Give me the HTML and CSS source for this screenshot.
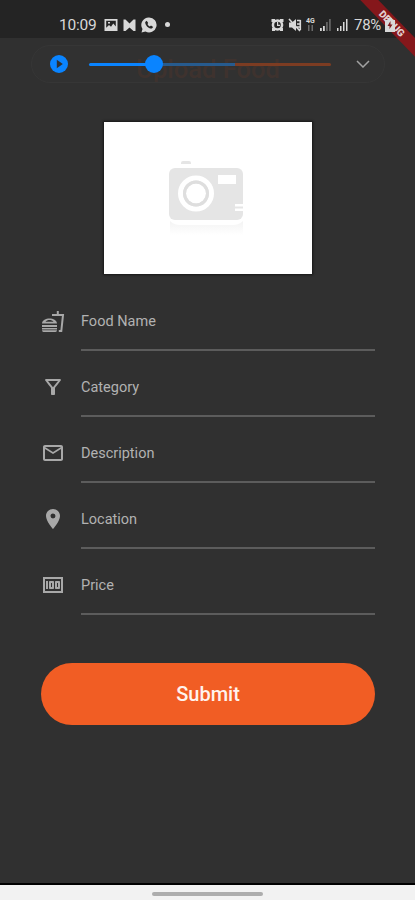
FILE: index.html
```html
<!DOCTYPE html>
<html lang="en">
<head>
  <meta charset="UTF-8" />
  <meta name="viewport" content="width=device-width, initial-scale=1.0"/>
  <title>Upload Food</title>
  <link rel="stylesheet" href="styles.css">
</head>
<body>
  <div class="status-bar">
    <div class="status-left">
      <span class="time">10:09</span>
      <svg width="14" height="14" viewBox="0 0 14 14"><path fill-rule="evenodd" d="M.5 1h13v12H.5zM2.200 2.700v7l2.800-2.600 2 1.700 2.300-3.300 2.500 3V2.700zM4 4h2v1.500H4z"/></svg>
      <svg width="13" height="14" viewBox="0 0 13 14"><path d="M.5 1.500h2l4 4 4-4h2v11.500h-2L6.500 9.500 2.500 13h-2z"/></svg>
      <svg width="16" height="16" viewBox="0 0 16 16"><path d="M8 .5a7.500 7.500 0 1 1-3.500 14.100L.5 15.500l1-3.500A7.500 7.500 0 0 1 8 .5z"/><path class="ink" d="M5.700 3.700 4.200 4.900c-.3 3 3.400 7 6.700 6.600l1.300-1.500-2.200-1.400-1.200.9C7.700 9 6.900 8 6.500 7l.7-1z"/></svg>
      <span class="dot"></span>
    </div>
    <div class="status-right">
      <svg width="13" height="14" viewBox="0 0 13 14"><path d="M.5 1h3.500v3H.5zM9 1h3.500v3H9zM1 10h3v3H1zM9 10h3v3H9z"/><circle cx="6.500" cy="7" r="5.800"/><circle class="ink" cx="6.500" cy="7" r="3.300"/><path d="M6 4h1.200v2.800H9V8H6z"/></svg>
      <svg width="14" height="14" viewBox="0 0 14 14"><path d="M1 4.500h3L8 1v12L4 9.500H1z"/><path class="line" d="m1 1 11 12M9 2.500h3.500M9 6h3.500M9 9h3.500M12.300 2v10"/></svg>
      <div class="network"><span>4G</span><svg width="9" height="6" viewBox="0 0 9 6"><path opacity=".4" d="M2 0h1.500v6H2zM5.500 0H7v6H5.500z"/></svg></div>
      <svg width="13" height="13" viewBox="0 0 13 13"><path d="M1 10h1.800v3H1zM4 8h1.800v5H4z"/><path opacity=".35" d="M7 4h1.800v9H7zM10 1h1.800v12H10z"/></svg>
      <svg width="13" height="13" viewBox="0 0 13 13"><path d="M1 10h1.500v3H1zM4 8h1.500v5H4zM7 4h1.500v9H7zM10 1h1.500v12H10z"/></svg>
      <span class="percent">78%</span>
      <svg width="10" height="14" viewBox="0 0 10 14"><path d="M3 0h4v2h3v12H0V2h3z"/><path class="bolt" d="M5.500 3 2.500 8h2v3l3-4.500h-2z"/></svg>
    </div>
  </div>
  <div class="ribbon">DEBUG</div>

  <header>
    <h1>Upload Food</h1>
    <div class="recorder">
      <svg width="18" height="18" viewBox="0 0 18 18"><circle cx="9" cy="9" r="9" fill="#0a84ff"/><path d="M6.800 4.700v8.600l6-4.300z" fill="#303030"/></svg>
      <div class="track"><span class="thumb"></span></div>
      <svg width="14" height="8" viewBox="0 0 14 8"><path d="m1 1 6 6 6-6" fill="none" stroke="#a2a2a2" stroke-width="1.500"/></svg>
    </div>
  </header>

  <main>
    <div class="photo">
      <svg width="80" height="76" viewBox="0 0 80 76">
        <defs>
          <linearGradient id="fade" x1="0" y1="0" x2="0" y2="1">
            <stop offset="0" stop-color="#f3f3f3"/>
            <stop offset="1" stop-color="#fff"/>
          </linearGradient>
        </defs>
        <path d="M13 3q0-2 2-2h6q2 0 2 2v1H13z" fill="#e5e5e5"/>
        <rect x="1" y="8" width="74" height="52" rx="6" fill="#e5e5e5"/>
        <circle cx="28" cy="33.500" r="15.500" fill="none" stroke="#fff" stroke-width="5"/>
        <circle cx="28" cy="33.500" r="10" fill="#fff"/>
        <circle cx="28" cy="33.500" r="11.500" fill="none" stroke="#dedede" stroke-width="3"/>
        <path d="M50 15h18v9H50zM67 44h9v2.500h-9zM67 48.500h9V51h-9z" fill="#fff"/>
        <path d="M2 61q4 4 10 4h53q6 0 10-4v14H2z" fill="url(#fade)"/>
      </svg>
    </div>

    <form>
      <label class="field">
        <svg width="24" height="24" viewBox="0 0 24 24"><path d="M1 14.500C1.500 7.800 15.500 7.800 16 14.500zM1 16h15v2H1zM1 19h15v1.500H1zM1 21.300h15q0 1.700-1.500 1.700h-12Q1 23 1 21.300z"/><path class="cut" d="M4.500 12.800c1.500-2.300 6.500-2.300 8 0z"/><path class="cup" d="M11 6h11l-1.700 16h-2.500M16.800 6V2"/></svg>
        <input type="text" placeholder="Food Name" />
      </label>
      <label class="field">
        <svg width="24" height="24" viewBox="0 0 24 24"><path d="M7 6h10l-5.010 6.300L7 6zm-2.750-.390C6.270 8.200 10 13 10 13v6c0 .55.450 1 1 1h2c.55 0 1-.45 1-1v-6s3.720-4.800 5.740-7.390A.998.998 0 0 0 18.950 4H5.040c-.83 0-1.300.950-.790 1.610z"/></svg>
        <input type="text" placeholder="Category" />
      </label>
      <label class="field">
        <svg width="24" height="24" viewBox="0 0 24 24"><path d="M20 4H4c-1.100 0-2 .9-2 2v12c0 1.100.9 2 2 2h16c1.100 0 2-.9 2-2V6c0-1.100-.9-2-2-2zm0 14H4V8l8 5 8-5v10zm-8-7L4 6h16l-8 5z"/></svg>
        <input type="text" placeholder="Description" />
      </label>
      <label class="field">
        <svg width="24" height="24" viewBox="0 0 24 24"><path d="M12 2C8.130 2 5 5.130 5 9c0 5.250 7 13 7 13s7-7.750 7-13c0-3.870-3.130-7-7-7zm0 9.500a2.500 2.500 0 0 1 0-5 2.500 2.500 0 0 1 0 5z"/></svg>
        <input type="text" placeholder="Location" />
      </label>
      <label class="field">
        <svg width="24" height="24" viewBox="0 0 24 24"><path d="M5 8h2v8H5zm7 0H9c-.55 0-1 .45-1 1v6c0 .55.450 1 1 1h3c.55 0 1-.45 1-1V9c0-.55-.45-1-1-1zm-1 6h-1v-4h1v4zm7-6h-3c-.55 0-1 .45-1 1v6c0 .55.450 1 1 1h3c.55 0 1-.45 1-1V9c0-.55-.45-1-1-1zm-1 6h-1v-4h1v4z"/><path d="M2 4v16h20V4H2zm2 14V6h16v12H4z"/></svg>
        <input type="text" placeholder="Price" />
      </label>
      <button class="submit" type="button">Submit</button>
    </form>
  </main>

  <div class="nav-bar"><span class="handle"></span></div>
</body>
</html>
```

FILE: styles.css
```css
:root {
  --bg: #303030;
  --bar: #242424;
  --text: #b2b2b2;
  --status: #d8d8d8;
  --primary: #f15d24;
  --blue: #0a84ff;
}
* {
  box-sizing: border-box;
}
body {
  margin: 0;
  position: relative;
  height: 900px;
  overflow: hidden;
  font-family: Roboto, sans-serif;
  background: var(--bg);
  color: var(--text);
  display: flex;
  flex-direction: column;
}
svg {
  display: block;
  flex: none;
}
.status-bar {
  height: 38px;
  padding: 11px 20px 0 59px;
  background: var(--bar);
  color: var(--status);
  fill: var(--status);
  display: flex;
  justify-content: space-between;
}
.status-left,
.status-right {
  height: 27px;
  display: flex;
  align-items: center;
}
.status-left {
  gap: 5px;
}
.status-right {
  gap: 4px;
}
.time {
  font-size: 15.5px;
  letter-spacing: -0.2px;
  width: 40px;
}
.percent {
  font-size: 15px;
  letter-spacing: -0.3px;
  margin-left: 1px;
}
.dot {
  width: 5px;
  height: 5px;
  margin-left: 3px;
  border-radius: 50%;
  background: var(--status);
}
.ink {
  fill: var(--bar);
}
.line {
  fill: none;
  stroke: var(--status);
  stroke-width: 1.6;
}
.network {
  font-size: 7px;
  line-height: 7px;
  font-weight: 700;
}
.status-right svg:last-child {
  position: relative;
  z-index: 2;
}
.bolt {
  fill: #801a1c;
}
.ribbon {
  position: absolute;
  z-index: 1;
  top: 17px;
  right: -27px;
  width: 100px;
  height: 13px;
  background: #85171b;
  color: #e3d0d0;
  font-size: 10px;
  font-weight: 900;
  line-height: 13px;
  text-align: center;
  transform: rotate(46deg);
}
header {
  height: 84px;
  padding: 7px 30px 0 31px;
  display: grid;
}
h1 {
  grid-area: 1 / 1;
  margin: 9px 0 0;
  font-size: 25.5px;
  line-height: 30px;
  font-weight: 500;
  text-align: center;
  color: #4b332b;
}
.recorder {
  grid-area: 1 / 1;
  position: relative;
  height: 38px;
  padding: 0 14px 0 18px;
  border: 1px solid #363636;
  border-radius: 19px;
  background: rgba(50, 50, 50, 0.5);
  display: flex;
  align-items: center;
}
.track {
  width: 242px;
  height: 3px;
  margin: 0 25px 0 21px;
  border-radius: 2px;
  background: linear-gradient(to right, var(--blue) 64px, #275b8e 64px, #275b8e 146px, #7c3c22 146px);
  display: flex;
  align-items: center;
}
.thumb {
  flex: none;
  width: 18px;
  height: 18px;
  margin-left: 56px;
  border-radius: 50%;
  background: var(--blue);
}
main {
  flex: 1;
  padding: 0 40px 0 41px;
}
.photo {
  width: 208px;
  height: 152px;
  margin: 0 auto;
  padding: 38px 0 0 64px;
  background: #fff;
  box-shadow: 0 0 2px 1px #161616;
}
form {
  padding-top: 27px;
}
.field {
  height: 66px;
  display: flex;
  align-items: flex-start;
  gap: 16px;
}
.field svg {
  margin-top: 8px;
  fill: #a8a8a8;
}
.field .cut {
  fill: var(--bg);
}
.field .cup {
  fill: none;
  stroke: #a8a8a8;
  stroke-width: 2;
}
.field input {
  flex: 1;
  min-width: 0;
  height: 50px;
  padding: 0 0 8px;
  border: none;
  border-bottom: 2px solid #5c5c5c;
  background: none;
  color: var(--text);
  font: 14.5px Roboto, sans-serif;
  outline: none;
}
.field input::placeholder {
  color: var(--text);
  opacity: 1;
}
.submit {
  width: 100%;
  height: 62px;
  margin-top: 32px;
  padding-bottom: 2px;
  border: none;
  border-radius: 31px;
  background: var(--primary);
  color: #fff3ee;
  font: 500 20px Roboto, sans-serif;
  cursor: pointer;
}
.nav-bar {
  height: 17px;
  border-top: 2px solid #000;
  background: #f2f2f2;
  display: flex;
  align-items: center;
  justify-content: center;
}
.handle {
  width: 111px;
  height: 4px;
  margin-top: 2px;
  border-radius: 2px;
  background: #adadad;
}
```
